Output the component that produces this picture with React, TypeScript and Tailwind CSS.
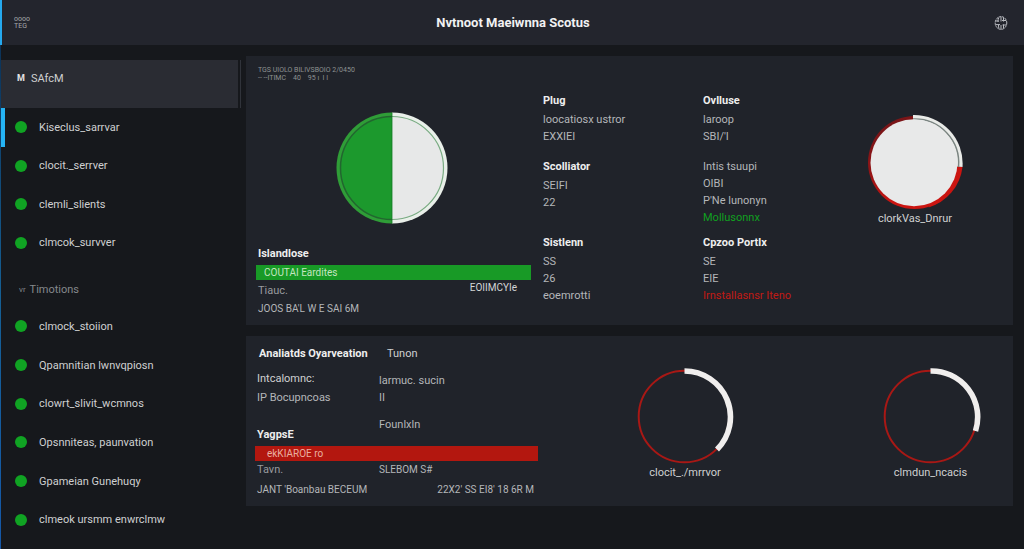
import React from "react";

type Line = { text: string; tone?: "normal" | "green" | "red" };
type Group = { title: string; plain?: boolean; lines: Line[] };

const servers = ["Kiseclus_sarrvar", "clocit._serrver", "clemli_slients", "clmcok_survver"];

const functions = [
  "clmock_stoiion",
  "Qpamnitian lwnvqpiosn",
  "clowrt_slivit_wcmnos",
  "Opsnniteas, paunvation",
  "Gpameian Gunehuqy",
  "clmeok ursmm enwrclmw",
];

const groups: Group[] = [
  { title: "Plug", lines: [{ text: "loocatiosx ustror" }, { text: "EXXIEI" }] },
  { title: "Ovlluse", lines: [{ text: "laroop" }, { text: "SBI/'I" }] },
  { title: "Scolliator", lines: [{ text: "SEIFI" }, { text: "22" }] },
  {
    title: "Intis tsuupi",
    plain: true,
    lines: [{ text: "OIBI" }, { text: "P'Ne lunonyn" }, { text: "Mollusonnx", tone: "green" }],
  },
  { title: "Sistlenn", lines: [{ text: "SS" }, { text: "26" }, { text: "eoemrotti" }] },
  {
    title: "Cpzoo Portlx",
    lines: [{ text: "SE" }, { text: "EIE" }, { text: "Irnstallasnsr Iteno", tone: "red" }],
  },
];

const tones = {
  normal: "text-[#b4b6b9]",
  green: "text-[#10a020]",
  red: "text-[#c01a14]",
};

function GlobeIcon() {
  return (
    <svg viewBox="0 0 14 14" className="h-3.5 w-3.5" fill="none" stroke="#b9bbc0" strokeWidth="1" aria-hidden="true">
      <ellipse cx="7" cy="7" rx="5.800" ry="6.400" strokeDasharray="2.6 .6" />
      <path d="M4.8 1.500C3.800 4 3.800 5 4.200 6M4.500 9C4.400 10.500 4.600 11.500 5 12.500M9.500 1.500V5.500M9.500 8.500V12.500M7 1v4.500M7 9v4M2 5h3M8 4.500h4M1.700 8.600H6M8.500 9h3.700" />
    </svg>
  );
}

function NavItem({ label, active }: { label: string; active?: boolean }) {
  return (
    <li className="flex flex-1">
      <button type="button" className="flex w-full items-center text-left">
        <span className={active ? "w-1 self-stretch bg-[#25b4f5]" : "w-1"} />
        <span className="ml-2.5 mr-3 h-3 w-3 shrink-0 rounded-full bg-[#10a323]" />
        <span className="whitespace-nowrap">{label}</span>
      </button>
    </li>
  );
}

function Pie() {
  return (
    <svg viewBox="0 0 112 112" className="h-28 w-28" role="img" aria-label="Half used">
      <path d="M56 .5a55.5 55.5 0 0 0 0 111z" fill="#2f9d37" />
      <path d="M56 .5a55.5 55.5 0 0 1 0 111z" fill="#e9efe9" />
      <path d="M56 4.500a51.500 51.500 0 0 0 0 103z" fill="#1c992d" />
      <path d="M56 4.500a51.500 51.500 0 0 1 0 103z" fill="#e7e8e8" />
      <path d="M56 4.500a51.500 51.500 0 0 0 0 103" fill="none" stroke="#22662f" strokeWidth="1.500" />
      <path d="M56 4.500a51.500 51.500 0 0 1 0 103" fill="none" stroke="#79ab82" strokeWidth="1.200" />
      <path d="M56 .5v111" stroke="#157a25" strokeWidth=".8" />
    </svg>
  );
}

function Disk() {
  return (
    <svg viewBox="0 0 100 97" className="h-[97px] w-[100px]" role="img" aria-label="Disk share">
      <defs>
        <linearGradient id="disk-red" x1="0" y1="0" x2=".6" y2="1">
          <stop offset="0" stopColor="#6a1518" />
          <stop offset=".45" stopColor="#931416" />
          <stop offset=".8" stopColor="#cb1511" />
        </linearGradient>
      </defs>
      <circle cx="49.500" cy="49.500" r="46.500" fill="url(#disk-red)" />
      <path d="M48 49.500V2a48.500 48.500 0 0 1 49.500 52z" fill="#e9ebe8" />
      <path d="M48 6a44 44 0 0 1 45.500 48" fill="none" stroke="#7b8582" strokeWidth="1.500" />
      <path d="M93 54h4.500a48 48 0 0 1-34 40.500z" fill="#cb1511" />
      <circle cx="49" cy="49.700" r="43.500" fill="#e8e9e9" />
    </svg>
  );
}

function Ring({ arc }: { arc: string }) {
  return (
    <svg viewBox="0 0 100 97" className="h-[97px] w-[100px]" fill="none" role="img" aria-label="Usage ring">
      <circle cx="49.500" cy="49.500" r="45.800" stroke="#a81815" strokeWidth="2" />
      <path d={arc} stroke="#f0eeed" strokeWidth="5.600" />
    </svg>
  );
}

export default function App() {
  return (
    <div className="flex min-h-screen flex-col bg-[#16181c] font-[Roboto,'Liberation_Sans',sans-serif] text-[11px] leading-[17px] text-[#b4b6b9]">
      <header className="grid h-[45px] grid-cols-[1fr_auto_1fr] items-center border-l-2 border-[#25a9ee] bg-[#23252d] pr-4">
        <div className="ml-3 text-[7px] leading-[7px] text-[#a5a7aa]">
          <div>oooo</div>
          <div>TEG</div>
        </div>
        <h1 className="pl-4 text-[13px] font-bold text-[#f1f1f2]">Nvtnoot Maeiwnna Scotus</h1>
        <button type="button" aria-label="Language" className="justify-self-end">
          <GlobeIcon />
        </button>
      </header>

      <div className="flex flex-1">
        <div className="w-px bg-linear-to-b from-[#0c3358] via-[#155f94] to-[#1557a8]" />
        <nav className="flex w-[240px] shrink-0 flex-col pb-2.5 pt-[15px] text-[#cfd0d1]">
          <div className="flex h-12 border-r border-[#30333a] pr-0.5">
            <button type="button" className="flex flex-1 items-start gap-1.5 bg-[#2a2c33] pl-4 pt-2.5 text-left">
              <span className="text-[9px] font-bold text-[#e4e4e4]">M</span>
              <span>SAfcM</span>
            </button>
          </div>
          <ul className="flex h-[154px] flex-col">
            {servers.map((name, i) => (
              <NavItem key={name} label={name} active={i === 0} />
            ))}
          </ul>
          <button type="button" className="flex h-[45px] items-center gap-1 pl-[18px] pt-2.5 text-left text-[#85888c]">
            <span className="text-[8px]">vr</span>
            <span>Timotions</span>
          </button>
          <ul className="flex flex-1 flex-col">
            {functions.map((name) => (
              <NavItem key={name} label={name} />
            ))}
          </ul>
        </nav>

        <main className="flex flex-1 flex-col gap-[11px] pb-[43px] pl-[5px] pr-[11px] pt-[11px]">
          <section className="grid grid-cols-[275fr_148fr_102fr_196fr] gap-x-3 bg-[#20232a] pb-2 pl-2.5">
            <div className="flex flex-col pt-2.5">
              <div className="pl-0.5 text-[7px] leading-[8px] text-[#8d9291]">
                <div>TGS UIOLO BILIVSBOIO 2/0450</div>
                <div>-- --ITIMC&nbsp; &nbsp; 40 &nbsp; &nbsp;95 ı&nbsp; I I</div>
              </div>
              <div className="flex justify-center pb-[21px] pr-1 pt-[30px]">
                <Pie />
              </div>
              <h2 className="pl-0.5 font-bold text-[#eeeeee]">Islandlose</h2>
              <div className="mt-[3px] bg-[#189a26] pl-2 text-[10px] leading-[15px] text-[#c4e5c0]">COUTAI Eardites</div>
              <div className="flex justify-between pl-0.5 pr-3.5 pt-0.5">
                <span className="text-[#989a9e]">Tiauc.</span>
                <span className="text-[10px] leading-3 text-[#d4d5d6]">EOIIMCYIe</span>
              </div>
              <div className="pl-0.5 pt-px text-[10px]">JOOS BA'L W E SAI 6M</div>
            </div>

            <div className="col-span-2 grid grid-cols-[148fr_102fr] grid-rows-[66px_76px_auto] gap-x-3 pt-9">
              {groups.map((group) => (
                <div key={group.title} className="whitespace-nowrap">
                  {group.plain ? (
                    <p>{group.title}</p>
                  ) : (
                    <h2 className="mb-0.5 font-bold text-[#eeeeee]">{group.title}</h2>
                  )}
                  {group.lines.map((line) => (
                    <p key={line.text} className={tones[line.tone ?? "normal"]}>
                      {line.text}
                    </p>
                  ))}
                </div>
              ))}
            </div>

            <figure className="flex flex-col items-center pt-[57px]">
              <Disk />
              <figcaption className="text-[#cfd0d1]">clorkVas_Dnrur</figcaption>
            </figure>
          </section>

          <section className="grid grid-cols-[283fr_294fr_181fr] bg-[#20232a] pb-2 pl-[9px]">
            <div className="flex flex-col pt-[9px]">
              <div className="grid grid-cols-[128fr_151fr] pl-1">
                <h2 className="whitespace-nowrap font-bold text-[#eeeeee]">Analiatds Oyarveation</h2>
                <span className="text-[#cfd0d1]">Tunon</span>
              </div>
              <div className="grid grid-cols-[122fr_159fr] pl-0.5 pt-2">
                <div>
                  <p className="text-[#cfd0d1]">Intcalomnc:</p>
                  <p className="pt-0.5">IP Bocupncoas</p>
                  <h2 className="pt-5 font-bold text-[#eeeeee]">YagpsE</h2>
                </div>
                <div className="pt-0.5">
                  <p>larmuc. sucin</p>
                  <p>II</p>
                  <p className="pt-2.5">Founlxln</p>
                </div>
              </div>
              <div className="mt-[3px] bg-[#b3170f] pl-3 text-[10px] leading-[15px] text-[#eab0a0]">ekKIAROE ro</div>
              <div className="grid grid-cols-[122fr_159fr] pl-0.5">
                <span className="text-[#989a9e]">Tavn.</span>
                <span className="text-[10px]">SLEBOM S#</span>
              </div>
              <div className="flex justify-between pl-0.5 pr-1 pt-[3px] text-[10px]">
                <span>JANT 'Boanbau BECEUM</span>
                <span>22X2' SS EI8' 18 6R M</span>
              </div>
            </div>
            <figure className="flex flex-col items-center pt-[31px]">
              <Ring arc="M49.500 4A46 46 0 0 1 82 82.500" />
              <figcaption className="text-[#cfd0d1]">clocit_./mrrvor</figcaption>
            </figure>
            <figure className="flex flex-col items-center pl-4 pt-[31px]">
              <Ring arc="M49.500 4A46 46 0 0 1 94.500 64" />
              <figcaption className="text-[#cfd0d1]">clmdun_ncacis</figcaption>
            </figure>
          </section>
        </main>
      </div>
    </div>
  );
}
